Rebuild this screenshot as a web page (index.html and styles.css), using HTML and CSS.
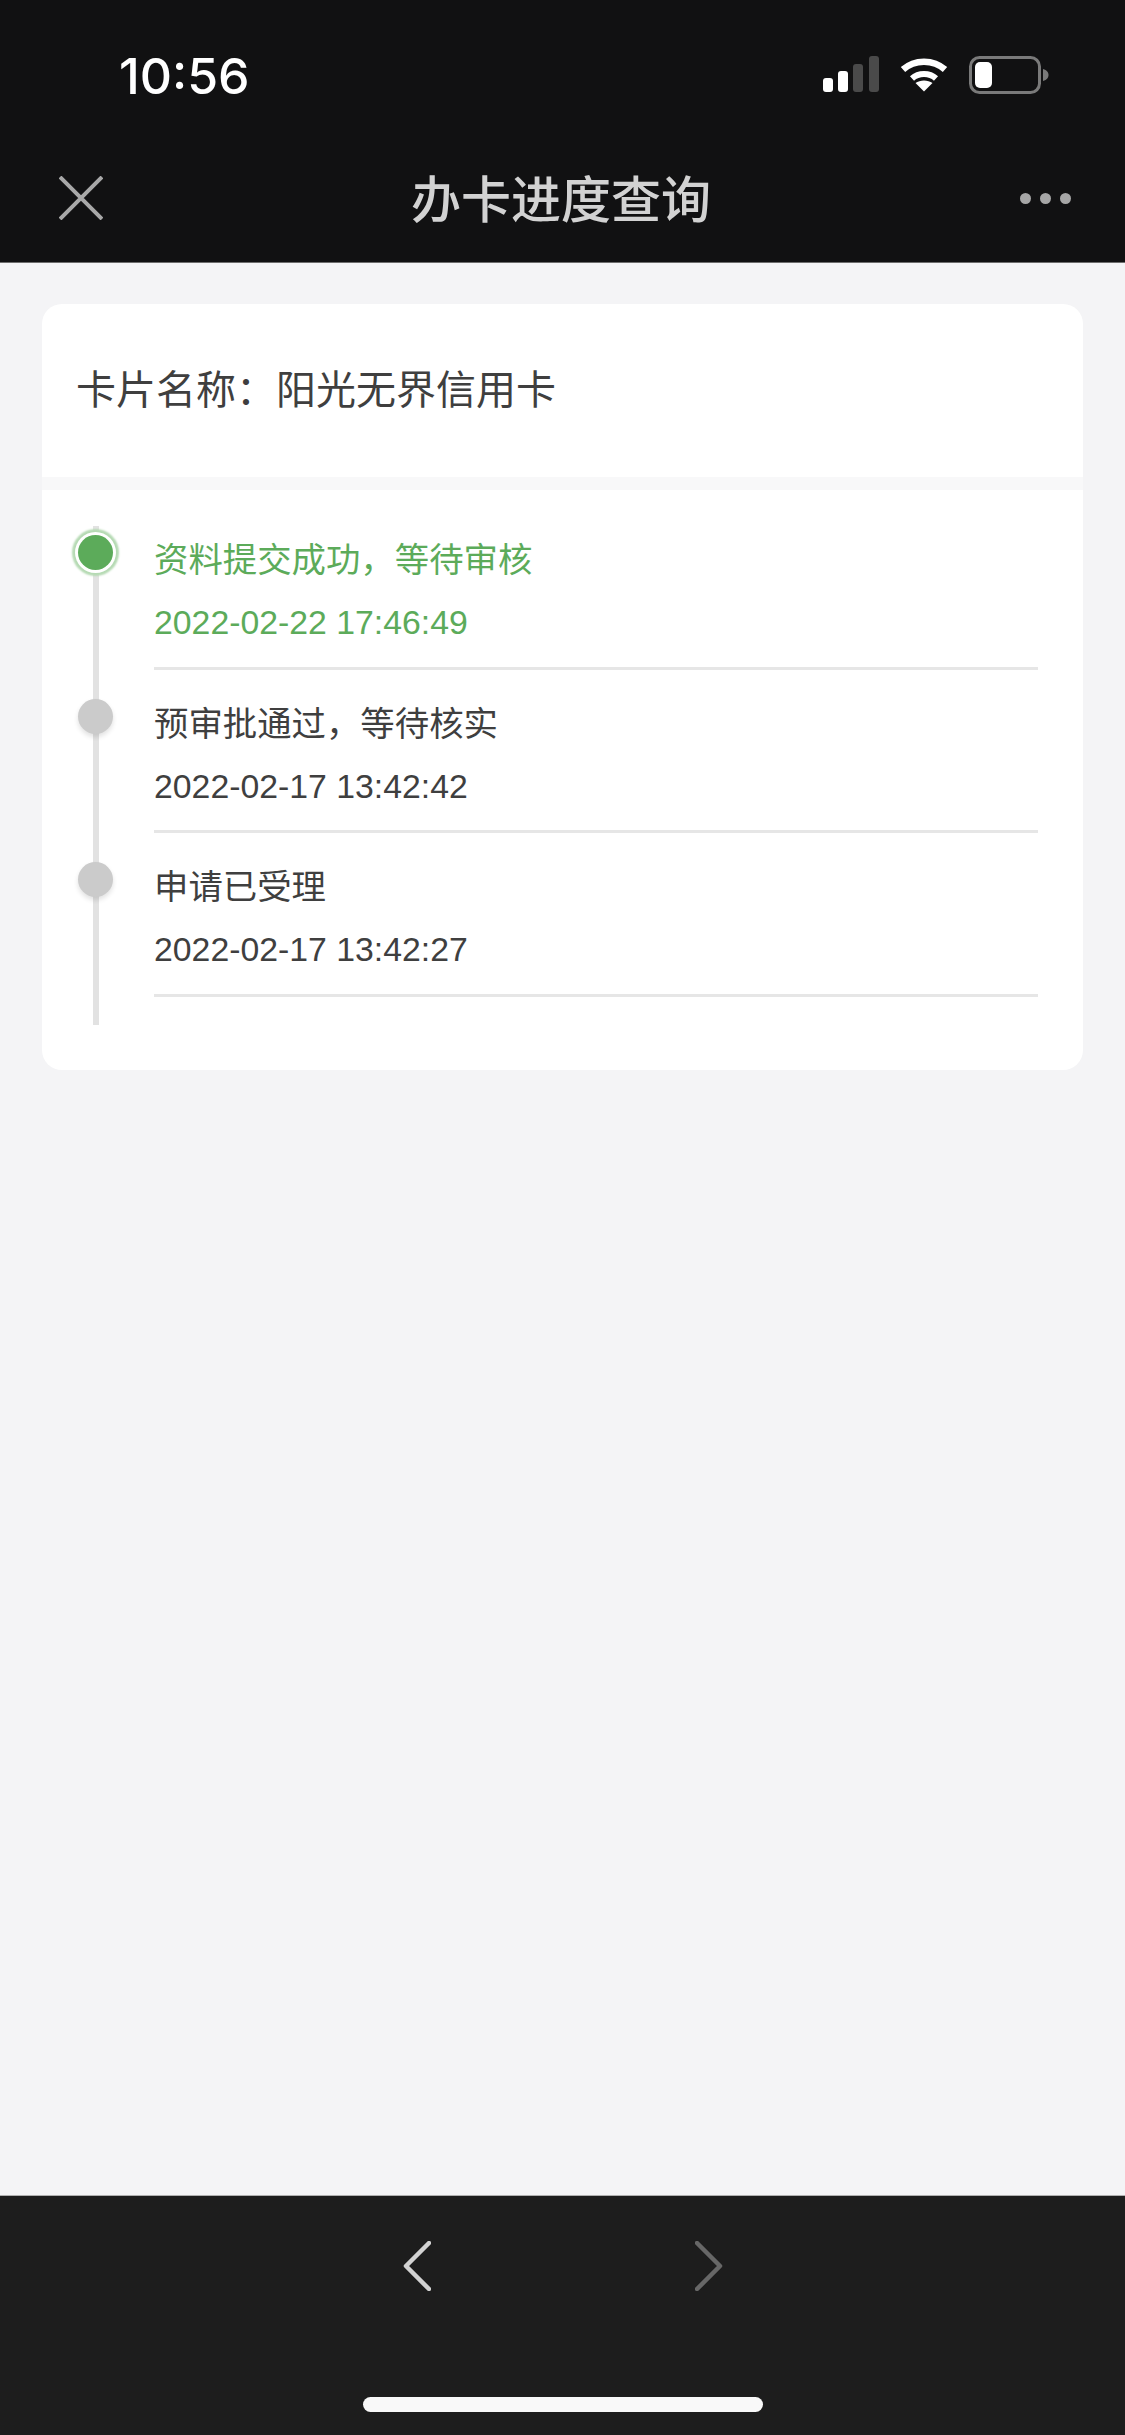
FILE: index.html
```html
<!DOCTYPE html>
<html lang="zh-CN">
<head>
<meta charset="utf-8">
<title>办卡进度查询</title>
<link rel="stylesheet" href="styles.css">
</head>
<body>
<div class="phone">
  <header class="top">
    <div class="status">
      <span class="time">10:56</span>
      <div class="status-icons">
        <svg class="signal" width="56" height="36" viewBox="0 0 56 36">
          <rect x="0" y="22" width="10" height="14" rx="3" fill="#fff"/>
          <rect x="15" y="15" width="10" height="21" rx="3" fill="#fff"/>
          <rect x="30" y="8" width="10" height="28" rx="3" fill="#4a4a4a"/>
          <rect x="46" y="0" width="10" height="36" rx="3" fill="#4a4a4a"/>
        </svg>
        <svg class="wifi" width="48" height="36" viewBox="0 0 48 36">
          <path d="M3 13.500C14.500 3 33.500 3 45 13.500" fill="none" stroke="#fff" stroke-width="6.500"/>
          <path d="M12 22.500C18.500 16.500 29.500 16.500 36 22.500" fill="none" stroke="#fff" stroke-width="6"/>
          <path d="M24 35.500L15.500 27C20 23.500 28 23.500 32.500 27Z" fill="#fff"/>
        </svg>
        <svg class="battery" width="80" height="38" viewBox="0 0 80 38">
          <rect x="1.500" y="1.500" width="69" height="35" rx="9" fill="none" stroke="#7a7a7a" stroke-width="3"/>
          <rect x="6" y="6" width="17" height="26" rx="5" fill="#fff"/>
          <path d="M74 13C78 14 79.500 16.500 79.500 19C79.500 21.500 78 24 74 25Z" fill="#7a7a7a"/>
        </svg>
      </div>
    </div>
    <nav class="nav">
      <svg class="close" width="44" height="44" viewBox="0 0 44 44">
        <path d="M1 1L43 43M43 1L1 43" stroke="#a8a8a8" stroke-width="4" fill="none"/>
      </svg>
      <h1 class="nav-title">办卡进度查询</h1>
      <div class="more"><i></i><i></i><i></i></div>
    </nav>
  </header>

  <main class="content">
    <section class="card">
      <div class="card-head">卡片名称&#xFF1A;阳光无界信用卡</div>
      <ol class="timeline">
        <li class="step step-active">
          <p class="step-text">资料提交成功&#xFF0C;等待审核</p>
          <p class="step-date">2022-02-22 17:46:49</p>
        </li>
        <li class="step">
          <p class="step-text">预审批通过&#xFF0C;等待核实</p>
          <p class="step-date">2022-02-17 13:42:42</p>
        </li>
        <li class="step">
          <p class="step-text">申请已受理</p>
          <p class="step-date">2022-02-17 13:42:27</p>
        </li>
      </ol>
    </section>
  </main>

  <footer class="bottom">
    <div class="arrows">
      <svg width="28" height="50" viewBox="0 0 28 50">
        <path d="M26 2L3 25L26 48" stroke="#d2d2d2" stroke-width="4.500" stroke-linecap="round" stroke-linejoin="round" fill="none"/>
      </svg>
      <svg width="28" height="50" viewBox="0 0 28 50">
        <path d="M2 2L25 25L2 48" stroke="#676767" stroke-width="4.500" stroke-linecap="round" stroke-linejoin="round" fill="none"/>
      </svg>
    </div>
    <div class="home-bar"></div>
  </footer>
</div>
</body>
</html>
```
FILE: styles.css
```css
* { box-sizing: border-box; }
html, body { margin: 0; padding: 0; }
body {
  font-family: "Liberation Sans", "Noto Sans CJK SC", sans-serif;
  background: #f4f4f6;
}
.phone {
  width: 1125px;
  height: 2435px;
  display: flex;
  flex-direction: column;
  overflow: hidden;
}
.top {
  height: 263px;
  background: #111112;
  border-bottom: 1px solid #6e6e6e;
  flex: none;
}
.status {
  height: 140px;
  display: flex;
  justify-content: space-between;
  align-items: flex-start;
  padding: 50px 76px 0 119px;
}
.time {
  font-family: "Inter", "Liberation Sans", sans-serif;
  font-size: 50px;
  line-height: 52px;
  font-weight: 500;
  color: #fff;
}
.status-icons {
  display: flex;
  align-items: flex-start;
  gap: 21px;
  padding-top: 6px;
}
.status-icons svg { display: block; }
.nav {
  height: 122px;
  display: flex;
  align-items: center;
  justify-content: space-between;
  padding: 0 54px 0 59px;
  margin-top: -3px;
}
.close { display: block; }
.nav-title {
  margin: -5px 0 0;
  font-size: 50px;
  line-height: 60px;
  font-weight: 500;
  color: #d2d2d2;
  font-family: "Noto Sans CJK SC", sans-serif;
}
.more {
  display: flex;
  gap: 9px;
  margin-left: 1px;
}
.more i {
  display: block;
  width: 11px;
  height: 11px;
  border-radius: 50%;
  background: #a6a6a6;
}
.content {
  flex: 1;
  padding: 41px 42px 0;
}
.card {
  background: #fff;
  border-radius: 20px;
  overflow: hidden;
}
.card-head {
  height: 186px;
  border-bottom: 13px solid #f8f8f9;
  padding: 3px 34px 10px;
  display: flex;
  align-items: center;
  font-size: 40px;
  color: #3f3f3f;
}
.timeline {
  list-style: none;
  margin: 0;
  padding: 16px 45px 73px 112px;
  position: relative;
}
.timeline::before {
  content: "";
  position: absolute;
  left: 51px;
  top: 36px;
  bottom: 45px;
  width: 6px;
  background: #e2e2e2;
}
.step {
  position: relative;
  height: 163.500px;
  border-bottom: 3px solid #e6e6e6;
  padding-top: 32px;
  color: #3f3f3f;
}
.step::before {
  content: "";
  position: absolute;
  left: -76px;
  top: 29px;
  width: 35px;
  height: 35px;
  border-radius: 50%;
  background: #cbcbcb;
  box-shadow: 0 3px 5px rgba(0, 0, 0, 0.12);
}
.step-active { color: #5cab5a; }
.step-active::before {
  background: #5cab5a;
  box-shadow: 0 0 0 3px #fff, 0 0 2px 6px #b5dab3;
}
.step-text {
  margin: 0;
  font-size: 34.400px;
  line-height: 44px;
}
.step-date {
  margin: 18px 0 0;
  font-size: 33.800px;
  line-height: 44px;
}
.bottom {
  height: 240px;
  background: #1d1d1d;
  border-top: 1px solid #b0b0b0;
  flex: none;
  display: flex;
  flex-direction: column;
  align-items: center;
}
.arrows {
  display: flex;
  gap: 264px;
  margin-top: 45px;
}
.arrows svg { display: block; }
.home-bar {
  width: 400px;
  height: 15px;
  border-radius: 8px;
  background: #f9f9f9;
  margin-top: 106px;
}
```
